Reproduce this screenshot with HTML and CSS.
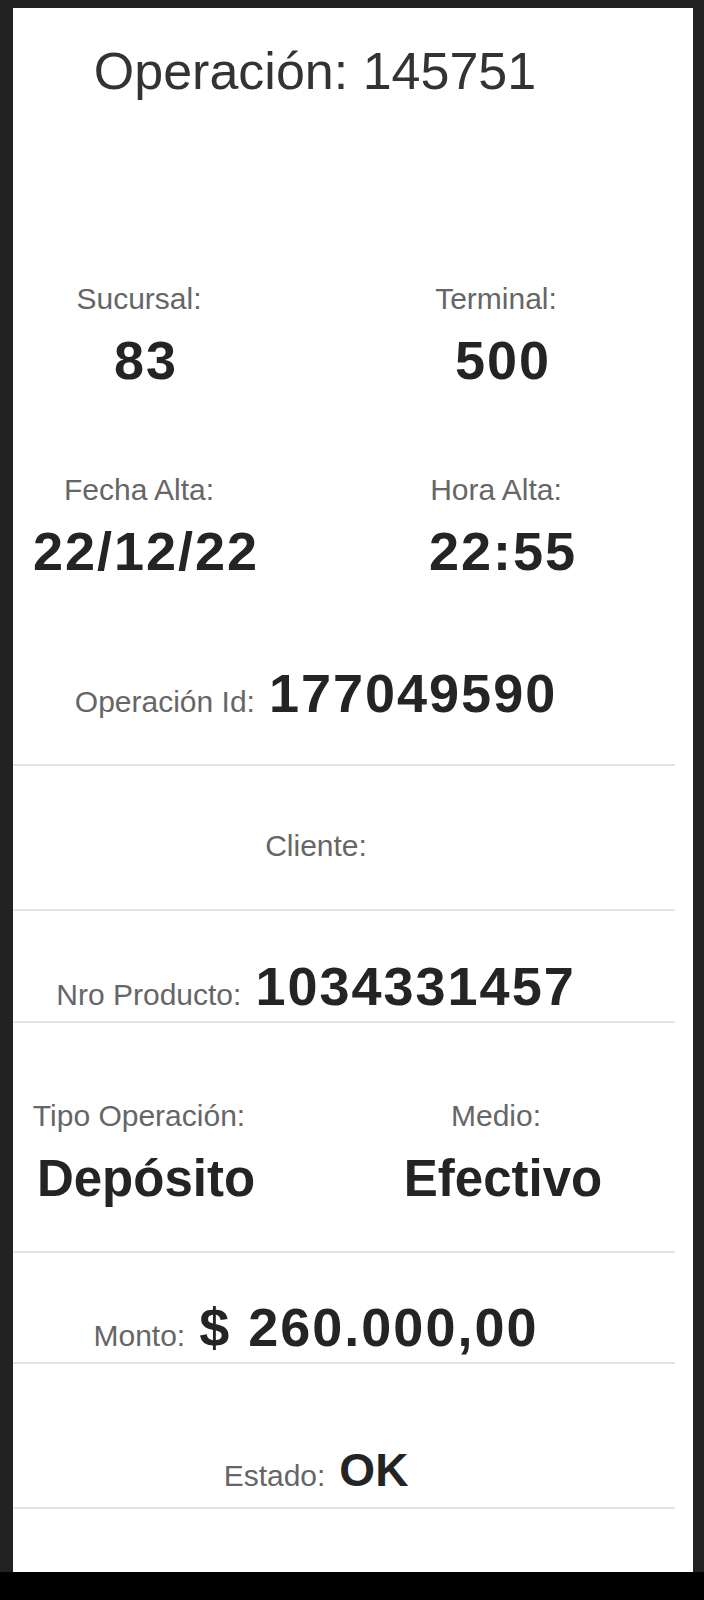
FILE: index.html
```html
<!DOCTYPE html>
<html lang="es">
<head>
<meta charset="utf-8">
<title>Operación 145751</title>
<link rel="stylesheet" href="styles.css">
</head>
<body>
<div class="screen">
  <main class="panel">
    <h1 class="title">Operación: 145751</h1>

    <section class="pairs">
      <div class="field">
        <span class="label">Sucursal:</span>
        <span class="value num">83</span>
      </div>
      <div class="field">
        <span class="label">Terminal:</span>
        <span class="value num">500</span>
      </div>
      <div class="field">
        <span class="label">Fecha Alta:</span>
        <span class="value num">22/12/22</span>
      </div>
      <div class="field">
        <span class="label">Hora Alta:</span>
        <span class="value num">22:55</span>
      </div>
    </section>

    <div class="row row-opid">
      <span class="label">Operación Id:</span>
      <span class="value num">177049590</span>
    </div>

    <div class="row row-cliente">
      <span class="label">Cliente:</span>
    </div>

    <div class="row row-producto">
      <span class="label">Nro Producto:</span>
      <span class="value num">1034331457</span>
    </div>

    <div class="row row-tipo">
      <div class="pairs pairs-inline">
        <div class="field">
          <span class="label">Tipo Operación:</span>
          <span class="value word">Depósito</span>
        </div>
        <div class="field">
          <span class="label">Medio:</span>
          <span class="value word">Efectivo</span>
        </div>
      </div>
    </div>

    <div class="row row-monto">
      <span class="label">Monto:</span>
      <span class="value num">$ 260.000,00</span>
    </div>

    <div class="row row-estado">
      <span class="label">Estado:</span>
      <span class="value ok">OK</span>
    </div>
  </main>
</div>
<footer class="bar"></footer>
</body>
</html>
```

FILE: styles.css
```css
* {
  box-sizing: border-box;
}

html, body {
  margin: 0;
  padding: 0;
}

body {
  background: #222222;
  font-family: "Liberation Sans", Arial, Helvetica, sans-serif;
  width: 704px;
  height: 1600px;
  overflow: hidden;
}

.screen {
  padding: 8px 11px 0 13px;
}

.panel {
  display: block;
  background: #ffffff;
  height: 1564px;
  padding-top: 33px;
}

.title {
  margin: 0;
  font-size: 52px;
  line-height: 60px;
  font-weight: 400;
  color: #333333;
  text-align: center;
  width: 662px;
  padding-right: 58px;
}

.label {
  font-size: 30px;
  line-height: 36px;
  color: #666666;
  font-weight: 400;
}

.value {
  font-weight: 700;
  color: #242424;
  line-height: 60px;
}

.num {
  font-size: 54px;
  letter-spacing: 2px;
}

.word {
  font-size: 51px;
}

.ok {
  font-size: 46px;
}

/* two-column stats */
.pairs {
  display: grid;
  grid-template-columns: 240px 240px;
  column-gap: 117px;
  row-gap: 82px;
  margin-top: 180px;
  padding-left: 13px;
}

.pairs-inline {
  margin-top: 0;
}

.field {
  display: flex;
  flex-direction: column;
  align-items: stretch;
  text-align: center;
  gap: 13px;
}

.field .label {
  display: block;
  padding-right: 14px;
}

.field .value {
  display: block;
}

/* bordered rows */
.row {
  width: 662px;
  display: flex;
  align-items: baseline;
  justify-content: center;
  gap: 14px;
  padding-right: 56px;
  border-bottom: 2px solid #e4e4e4;
}

.row-opid {
  margin-top: 82px;
  padding-bottom: 41px;
}

.row-cliente {
  padding-top: 62px;
  padding-bottom: 45px;
}

.row-producto {
  padding-top: 45px;
  padding-bottom: 5px;
}

.row-tipo {
  display: block;
  padding-right: 0;
  padding-top: 75px;
  padding-bottom: 42px;
}

.row-tipo .field {
  gap: 15px;
}

.row-monto {
  padding-top: 44px;
  padding-bottom: 5px;
}

.row-estado {
  padding-top: 76px;
  padding-bottom: 7px;
}

.bar {
  display: block;
  height: 28px;
  background: #000000;
}
```
